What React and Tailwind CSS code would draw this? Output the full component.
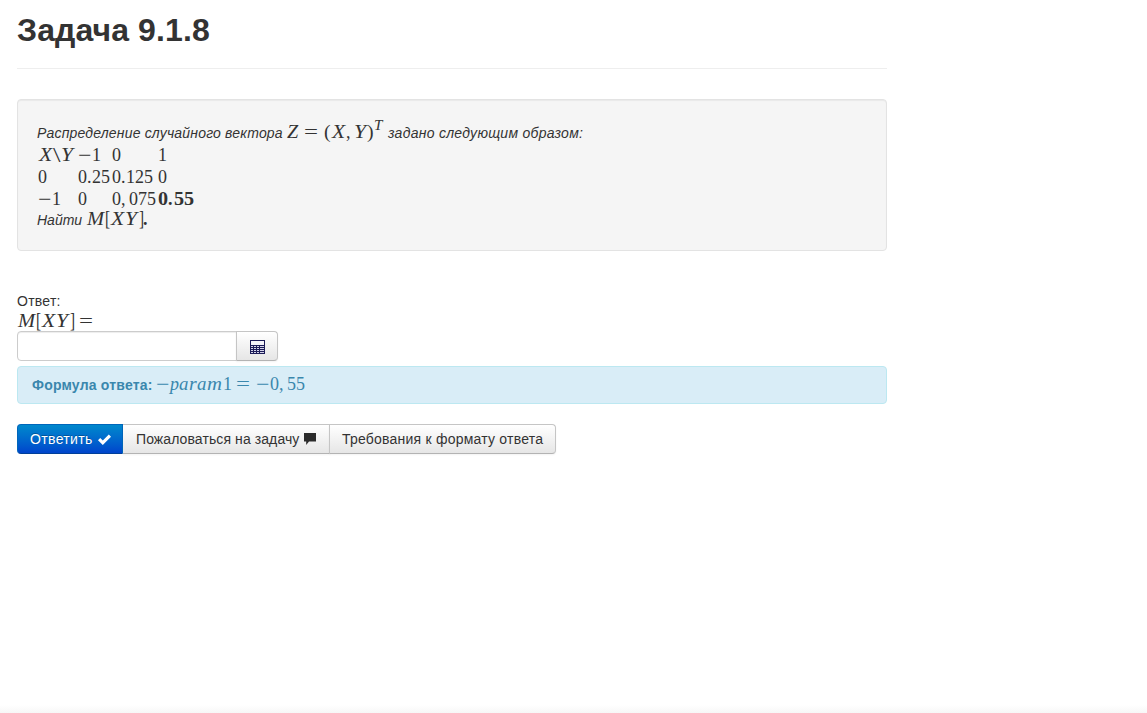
import React from "react";

// One math glyph: `w` is the advance width, `s` the horizontal stretch.
const G = ({ w, s = "", children }) => (
  <span className={`inline-block shrink-0 whitespace-pre ${w}`}>
    <span className={`inline-block origin-left ${s}`}>{children}</span>
  </span>
);

const Tex = ({ className = "", children }) => (
  <span
    className={`inline-flex items-baseline font-['Liberation_Serif',serif] text-[18px] leading-[20px] tracking-normal not-italic ${className}`}
  >
    {children}
  </span>
);

const X = () => <G w="w-[15px] italic" s="translate-x-px scale-x-[1.2]">X</G>;
const Y = () => <G w="w-[14px] italic" s="scale-x-[1.2]">Y</G>;
const Minus = () => <G w="w-[14px]" s="scale-x-[1.32]">−</G>;
const Eq = () => <G w="w-[14px]" s="scale-x-[1.38]">=</G>;

const MXY = () => (
  <>
    <G w="w-[19px] italic" s="translate-x-px scale-x-[1.14]">M</G>
    <G w="w-[5px]" s="-translate-y-px scale-x-[0.85] scale-y-[1.15]">[</G>
    <X />
    <Y />
    <G w="w-[5px]" s="-translate-y-px scale-x-[0.85] scale-y-[1.15]">]</G>
  </>
);

const Row = ({ cells }) => (
  <div className="grid h-[22px] grid-cols-[40px_34px_46px_60px] items-center pt-px pl-px">
    {cells.map((c, i) => (
      <Tex key={i}>{c}</Tex>
    ))}
  </div>
);

const grey =
  "border-[#c5c5c5] border-b-[#b3b3b3] bg-linear-to-b from-white to-[#e6e6e6] text-[#333] shadow-[inset_0_1px_0_rgba(255,255,255,.2),0_1px_2px_rgba(0,0,0,.05)]";

export default function App() {
  return (
    <div className="flex h-[713px] flex-col overflow-hidden bg-white font-['Liberation_Sans',Arial,sans-serif] text-[14px] leading-[20px] text-[#333]">
      <main className="ml-[17px] w-[870px]">
        <header className="h-[69px] border-b border-[#eee] pt-[10px]">
          <h1 className="text-[32px] leading-[40px] font-bold tracking-[0.1px]">Задача 9.1.8</h1>
        </header>

        <section className="mt-[30px] h-[152px] rounded-[4px] border border-[#e3e3e3] bg-[#f5f5f5] pt-[19px] pl-[19px] shadow-[inset_0_1px_1px_rgba(0,0,0,.05)]">
          <div className="flex h-[24px] items-baseline pt-[3px] whitespace-pre italic">
            <span className="w-[249px] tracking-[0.18px]">Распределение случайного вектора</span>
            <Tex className="w-[102px]">
              <G w="w-[18px] italic" s="translate-x-px scale-x-[1.12]">Z</G>
              <G w="w-[20px]" s="scale-x-[1.38]">=</G>
              <G w="w-[7px]" s="-translate-y-px scale-x-[1.1] scale-y-[1.1]">(</G>
              <X />
              <G w="w-[8px]">,</G>
              <Y />
              <G w="w-[6px]" s="-translate-x-px -translate-y-px scale-x-[1.1] scale-y-[1.1]">)</G>
              <span className="relative -top-[8px] text-[14px] leading-none italic">
                <G w="w-[10px]" s="scale-x-[1.08]">T</G>
              </span>
            </Tex>
            <span className="tracking-[0.27px]">задано следующим образом:</span>
          </div>
          <Row
            cells={[
              <><X /><G w="w-[8px]" s="scale-x-[1.5] scale-y-[1.2]">\</G><Y /></>,
              <><Minus /><span>1</span></>,
              "0",
              "1",
            ]}
          />
          <Row
            cells={[
              "0",
              <><G w="w-[9px]">0</G><G w="w-[5px]">.</G>25</>,
              <><G w="w-[9px]">0</G><G w="w-[5px]">.</G>125</>,
              "0",
            ]}
          />
          <Row
            cells={[
              <><Minus /><span>1</span></>,
              "0",
              <><G w="w-[9px]">0</G><G w="w-[8px]">,</G>075</>,
              <b className="flex"><G w="w-[10px]" s="scale-x-[1.12]">0</G><G w="w-[6px]">.</G><G w="w-[10px]" s="scale-x-[1.12]">5</G><G w="w-[10px]" s="scale-x-[1.12]">5</G></b>,
            ]}
          />
          <div className="flex h-[20px] items-baseline italic">
            <span className="w-[49px]">Найти</span>
            <Tex><MXY /><b className="-ml-px">.</b></Tex>
          </div>
        </section>

        <div className="mt-[40px] h-[20px] tracking-[0.25px]">Ответ:</div>
        <div className="flex h-[20px] items-center">
          <Tex><MXY /><span className="w-[4px]" /><Eq /></Tex>
        </div>

        <div className="flex h-[30px]">
          <input
            aria-label="Ответ"
            className="w-[220px] rounded-l-[4px] border border-[#ccc] bg-white px-[6px] shadow-[inset_0_1px_1px_rgba(0,0,0,.075)] outline-none"
          />
          <button
            aria-label="Калькулятор"
            className={`-ml-px flex w-[42px] items-center justify-center rounded-r-[4px] border pt-[2px] pl-px ${grey}`}
          >
            <svg width="15" height="14" viewBox="0 0 15 14" shapeRendering="crispEdges">
              <path fill="#1c1c58" d="M0 0h15v14H0z" />
              <path fill="#f4f4fa" d="M1 1h13v4H1z" />
              <path
                fill="#d5d5ea"
                d="M1 6h2v1H1zM4 6h2v1H4zM7 6h2v1H7zM10 6h4v1h-4zM1 8h2v1H1zM4 8h2v1H4zM7 8h2v1H7zM10 8h4v1h-4zM1 10h2v1H1zM4 10h2v1H4zM7 10h2v1H7zM10 10h4v1h-4zM1 12h2v1H1zM4 12h2v1H4zM7 12h2v1H7zM10 12h4v1h-4z"
              />
            </svg>
          </button>
        </div>

        <div className="mt-[5px] flex h-[38px] items-baseline rounded-[4px] border border-[#bce8f1] bg-[#d9edf7] pt-[7px] pl-[14px] text-[#3a87ad]">
          <b className="w-[124px] tracking-[0.2px]">Формула ответа:</b>
          <Tex>
            <G w="w-[14px]" s="scale-x-[1.32]">−</G>
            <G w="w-[9px] italic">p</G>
            <G w="w-[10px] italic" s="scale-x-[1.05]">a</G>
            <G w="w-[8px] italic" s="scale-x-[1.1]">r</G>
            <G w="w-[10px] italic" s="scale-x-[1.05]">a</G>
            <G w="w-[16px] italic" s="scale-x-[1.15]">m</G>
            <G w="w-[13px]">1</G>
            <G w="w-[20px]" s="scale-x-[1.38]">=</G>
            <Minus />
            <G w="w-[9px]">0</G>
            <G w="w-[8px]">,</G>
            55
          </Tex>
        </div>

        <div className="mt-[20px] flex h-[30px] whitespace-nowrap">
          <button className="flex w-[106px] items-center rounded-l-[4px] border border-[#0066bb] border-b-[#003f99] bg-linear-to-b from-[#0088cc] to-[#0044cc] pl-[12px] tracking-[0.35px] text-white [text-shadow:0_-1px_0_rgba(0,0,0,.25)]">
            Ответить
            <svg className="ml-[5px]" width="13" height="11" viewBox="0 0 13 11">
              <path fill="#fff" d="M0 6.3 2.2 4l2.6 2.5L10.8.5 13 2.7 4.8 11z" />
            </svg>
          </button>
          <button className={`flex w-[207px] items-center border border-l-0 pl-[13px] tracking-[0.09px] ${grey}`}>
            Пожаловаться на задачу
            <svg className="-mt-px ml-[5px]" width="12" height="12" viewBox="0 0 12 12">
              <path fill="#2b2b2b" d="M0 0h12v8.5H5L2.2 12V8.5H0z" />
            </svg>
          </button>
          <button className={`flex w-[227px] items-center rounded-r-[4px] border pl-[12px] -ml-px tracking-[0.22px] ${grey}`}>
            Требования к формату ответа
          </button>
        </div>
      </main>
      <footer className="mt-auto h-[8px] bg-linear-to-b from-white to-[#f7f7f7]" />
    </div>
  );
}
